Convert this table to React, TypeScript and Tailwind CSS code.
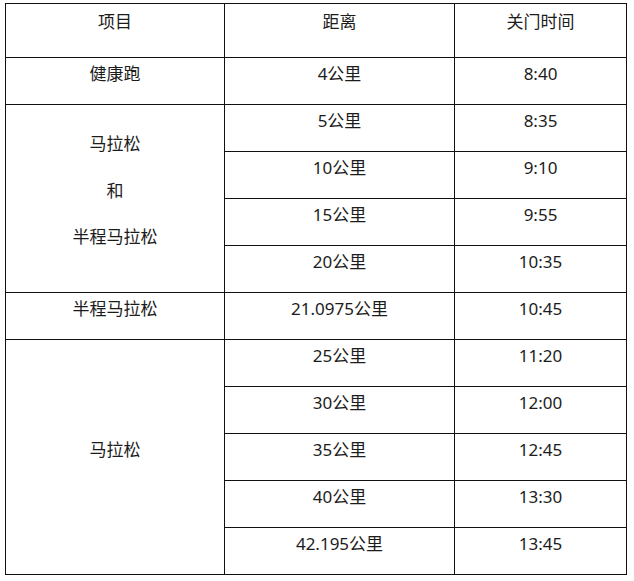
const rows: { name?: string; span?: number; dist: string; time: string }[] = [
  { name: '健康跑', span: 1, dist: '4公里', time: '8:40' },
  { name: '马拉松\n和\n半程马拉松', span: 4, dist: '5公里', time: '8:35' },
  { dist: '10公里', time: '9:10' },
  { dist: '15公里', time: '9:55' },
  { dist: '20公里', time: '10:35' },
  { name: '半程马拉松', span: 1, dist: '21.0975公里', time: '10:45' },
  { name: '马拉松', span: 5, dist: '25公里', time: '11:20' },
  { dist: '30公里', time: '12:00' },
  { dist: '35公里', time: '12:45' },
  { dist: '40公里', time: '13:30' },
  { dist: '42.195公里', time: '13:45' },
];

export default function App() {
  return (
    <div
      className="w-[634px] h-[581px] bg-white pt-[3px] pl-[5px] text-[#1c1c1c] text-[17px]"
      style={{ fontFamily: '"Noto Sans", "Noto Sans CJK SC", sans-serif' }}
    >
      <table className="border-collapse table-fixed">
        <colgroup>
          <col className="w-[219px]" />
          <col className="w-[230px]" />
          <col className="w-[172px]" />
        </colgroup>
        <thead>
          <tr className="h-[54px]">
            <th className="border border-[#111] font-normal align-middle pb-[18px] leading-none">项目</th>
            <th className="border border-[#111] font-normal align-middle pb-[18px] leading-none">距离</th>
            <th className="border border-[#111] font-normal align-middle pb-[18px] leading-none">关门时间</th>
          </tr>
        </thead>
        <tbody>
          {rows.map((r, i) => (
            <tr key={i} className="h-[47px]">
              {r.name && (
                <td
                  rowSpan={r.span}
                  className={
                    r.name.includes('\n')
                      ? 'border border-[#111] text-center align-middle pb-[15px] leading-[46.5px] whitespace-pre-line'
                      : 'border border-[#111] text-center align-middle pb-[15px] leading-none'
                  }
                >
                  {r.name}
                </td>
              )}
              <td className="border border-[#111] text-center align-middle pb-[15px] leading-none">{r.dist}</td>
              <td className="border border-[#111] text-center align-middle pb-[15px] leading-none">{r.time}</td>
            </tr>
          ))}
        </tbody>
      </table>
    </div>
  );
}
